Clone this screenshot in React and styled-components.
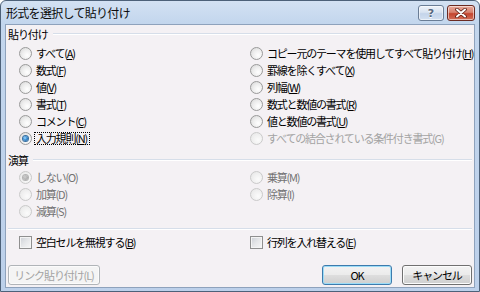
import React from "react";
import styled, { createGlobalStyle } from "styled-components";

const GlobalStyle = createGlobalStyle`
  html, body { margin: 0; padding: 0; }
  body {
    width: 480px; height: 292px; overflow: hidden; background: #fff;
    font-family: "Noto Sans CJK JP", "Noto Sans", sans-serif;
  }
  #root { width: 480px; height: 292px; }
`;

const Window = styled.div`
  box-sizing: border-box;
  width: 480px;
  height: 292px;
  border: 1px solid #4d6179;
  border-radius: 6px 6px 0 0;
  background: linear-gradient(180deg, #d3e1f3 0px, #c3d6ed 22px, #bcd0ea 100%);
  display: flex;
  flex-direction: column;
  overflow: hidden;
`;

const TitleBar = styled.div`
  flex: none;
  height: 23px;
  display: flex;
  align-items: flex-start;
  padding: 0 4px 0 5px;
`;

const Title = styled.div`
  flex: 1;
  font-size: 12px;
  line-height: 23px;
  letter-spacing: -0.7px;
  color: #0c0c0c;
`;

const CaptionButtons = styled.div`
  display: flex;
  gap: 3px;
  margin-top: 4px;
`;

const CaptionButton = styled.div`
  box-sizing: border-box;
  width: ${(p) => p.$w}px;
  height: 16px;
  border-radius: 3px;
  border: 1px solid ${(p) => (p.$close ? "#6b2a22" : "#6a7d96")};
  background: ${(p) =>
    p.$close
      ? "linear-gradient(180deg, #e9a99c 0%, #d7826f 45%, #c4452f 55%, #d2705a 100%)"
      : "linear-gradient(180deg, #eef3fa 0%, #d8e3f1 45%, #c4d4ea 55%, #d3e0f1 100%)"};
  box-shadow: inset 0 0 0 1px rgba(255, 255, 255, 0.55);
  display: flex;
  align-items: center;
  justify-content: center;
`;

const HelpGlyph = styled.span`
  font-family: "DejaVu Sans", sans-serif;
  font-weight: bold;
  font-size: 11px;
  line-height: 1;
  color: #56677f;
  text-shadow: 0 1px 0 #fff;
`;

const Client = styled.div`
  flex: 1;
  margin: 0 4px 3px;
  border: 1px solid #8ea2bc;
  background: #f4f1f4;
  padding: 2px 2px 0 2px;
  display: flex;
  flex-direction: column;
`;

const GroupHeading = styled.div`
  display: flex;
  align-items: center;
  gap: 5px;
  height: 14px;
  margin-top: ${(p) => p.$top}px;
  font-size: 11px;
  letter-spacing: -1.1px;
  color: #000;
  &::after {
    content: "";
    flex: 1;
    border-top: 1px solid #d6dee9;
    border-bottom: 1px solid #ffffff;
  }
`;

const OptionGrid = styled.div`
  display: grid;
  grid-template-columns: 231px 1fr;
  grid-template-rows: repeat(${(p) => p.$rows}, 17px);
  grid-auto-flow: column;
  padding-left: 11px;
  margin-top: ${(p) => p.$top}px;
`;

const Option = styled.label`
  display: flex;
  align-items: center;
  gap: 3px;
  font-size: 11px;
  letter-spacing: -1.2px;
  white-space: nowrap;
  color: ${(p) => p.$color || "#000"};
  u {
    text-decoration: underline;
    text-underline-offset: 1px;
  }
`;

const Label = styled.span`
  padding: 0 2px 0 1px;
  border: 1px ${(p) => (p.$focus ? "dotted #000" : "solid transparent")};
  margin-left: -1px;
  line-height: 11px;
`;

const Radio = styled.span`
  box-sizing: border-box;
  flex: none;
  width: 13px;
  height: 13px;
  border-radius: 50%;
  border: 1px solid ${(p) => (p.$disabled ? "#cacaca" : "#9a9a9a")};
  background: ${(p) =>
    p.$disabled
      ? "radial-gradient(circle at 65% 65%, #fbfbfb 0%, #eeeeee 60%, #e3e3e3 100%)"
      : "radial-gradient(circle at 65% 65%, #ffffff 0%, #ededed 50%, #d3d3d3 100%)"};
  display: flex;
  align-items: center;
  justify-content: center;
  &::after {
    content: "";
    display: ${(p) => (p.$checked ? "block" : "none")};
    width: 5px;
    height: 5px;
    border-radius: 50%;
    background: ${(p) =>
      p.$disabled
        ? "radial-gradient(circle at 40% 40%, #d0d0d0 0%, #9a9a9a 100%)"
        : "radial-gradient(circle at 40% 40%, #a9dcff 0%, #3a8fd4 45%, #14508c 100%)"};
    box-shadow: 0 0 0 1px ${(p) => (p.$disabled ? "#b4b4b4" : "#3a6f9f")};
  }
`;

const Check = styled.span`
  box-sizing: border-box;
  flex: none;
  width: 13px;
  height: 13px;
  border: 1px solid #8f8f8f;
  background: linear-gradient(135deg, #cbcfd5 0%, #e6e7e9 50%, #f7f7f7 100%);
  box-shadow: inset 0 0 0 1px #f4f4f4;
`;

const Separator = styled.div`
  margin: ${(p) => p.$top}px 0 0;
  border-top: 1px solid #d6dee9;
  border-bottom: 1px solid #ffffff;
`;

const Footer = styled.div`
  display: flex;
  align-items: center;
  margin-top: 14px;
  gap: 10px;
`;

const Spacer = styled.div`
  flex: 1;
`;

const Button = styled.button`
  box-sizing: border-box;
  width: ${(p) => p.$w}px;
  height: 20px;
  padding: 0;
  border-radius: 3px;
  font-family: inherit;
  font-size: 11px;
  letter-spacing: -1.1px;
  border: 1px solid
    ${(p) => (p.$disabled ? "#b0b4b8" : p.$default ? "#3d7bad" : "#707070")};
  color: ${(p) => (p.$disabled ? "#a3a3a3" : "#000")};
  background: ${(p) =>
    p.$disabled
      ? "#f4f4f4"
      : "linear-gradient(180deg, #f3f3f3 0%, #ebebeb 48%, #dddddd 52%, #cfcfcf 100%)"};
  box-shadow: inset 0 0 0 1px
    ${(p) => (p.$disabled ? "#fbfbfb" : p.$default ? "#9cdcf7" : "#fcfcfc")};
  display: flex;
  align-items: center;
  justify-content: center;
`;

const pasteLeft = [
  { t: "すべて(", k: "A" },
  { t: "数式(", k: "F" },
  { t: "値(", k: "V" },
  { t: "書式(", k: "T" },
  { t: "コメント(", k: "C" },
  { t: "入力規則(", k: "N", checked: true, focus: true },
];

const pasteRight = [
  { t: "コピー元のテーマを使用してすべて貼り付け(", k: "H" },
  { t: "罫線を除くすべて(", k: "X" },
  { t: "列幅(", k: "W" },
  { t: "数式と数値の書式(", k: "R" },
  { t: "値と数値の書式(", k: "U" },
  { t: "すべての結合されている条件付き書式(G)", disabled: true, color: "#a3a3a3" },
];

const ops = [
  { t: "しない(O)", checked: true },
  { t: "加算(D)" },
  { t: "減算(S)" },
  { t: "乗算(M)" },
  { t: "除算(I)" },
];

function RadioOption({ o }) {
  return (
    <Option $color={o.color}>
      <Radio $checked={o.checked} $disabled={o.disabled} />
      <Label $focus={o.focus}>
        {o.t}
        {o.k && (
          <>
            <u>{o.k}</u>)
          </>
        )}
      </Label>
    </Option>
  );
}

export default function App() {
  return (
    <>
      <GlobalStyle />
      <Window>
        <TitleBar>
          <Title>形式を選択して貼り付け</Title>
          <CaptionButtons>
            <CaptionButton $w={26}>
              <HelpGlyph>?</HelpGlyph>
            </CaptionButton>
            <CaptionButton $w={28} $close>
              <svg width="12" height="10" viewBox="0 0 12 10">
                <path d="M2 1.5 L10 8.5 M10 1.5 L2 8.5" stroke="#5c1d14" strokeWidth="3.6" strokeLinecap="round" />
                <path d="M2 1.5 L10 8.5 M10 1.5 L2 8.5" stroke="#ffffff" strokeWidth="2" strokeLinecap="round" />
              </svg>
            </CaptionButton>
          </CaptionButtons>
        </TitleBar>
        <Client>
          <GroupHeading $top={0}>貼り付け</GroupHeading>
          <OptionGrid $rows={6} $top={4}>
            {[...pasteLeft, ...pasteRight].map((o, i) => (
              <RadioOption key={i} o={o} />
            ))}
          </OptionGrid>
          <GroupHeading $top={6}>演算</GroupHeading>
          <OptionGrid $rows={3} $top={2}>
            {ops.map((o, i) => (
              <RadioOption key={i} o={{ ...o, disabled: true, color: "#727272" }} />
            ))}
          </OptionGrid>
          <Separator $top={8} />
          <OptionGrid $rows={1} $top={4}>
            <Option>
              <Check />
              <Label>
                空白セルを無視する(<u>B</u>)
              </Label>
            </Option>
            <Option>
              <Check />
              <Label>
                行列を入れ替える(<u>E</u>)
              </Label>
            </Option>
          </OptionGrid>
          <Footer>
            <Button $w={92} $disabled disabled>
              リンク貼り付け(L)
            </Button>
            <Spacer />
            <Button $w={70} $default>
              OK
            </Button>
            <Button $w={70}>キャンセル</Button>
          </Footer>
        </Client>
      </Window>
    </>
  );
}
